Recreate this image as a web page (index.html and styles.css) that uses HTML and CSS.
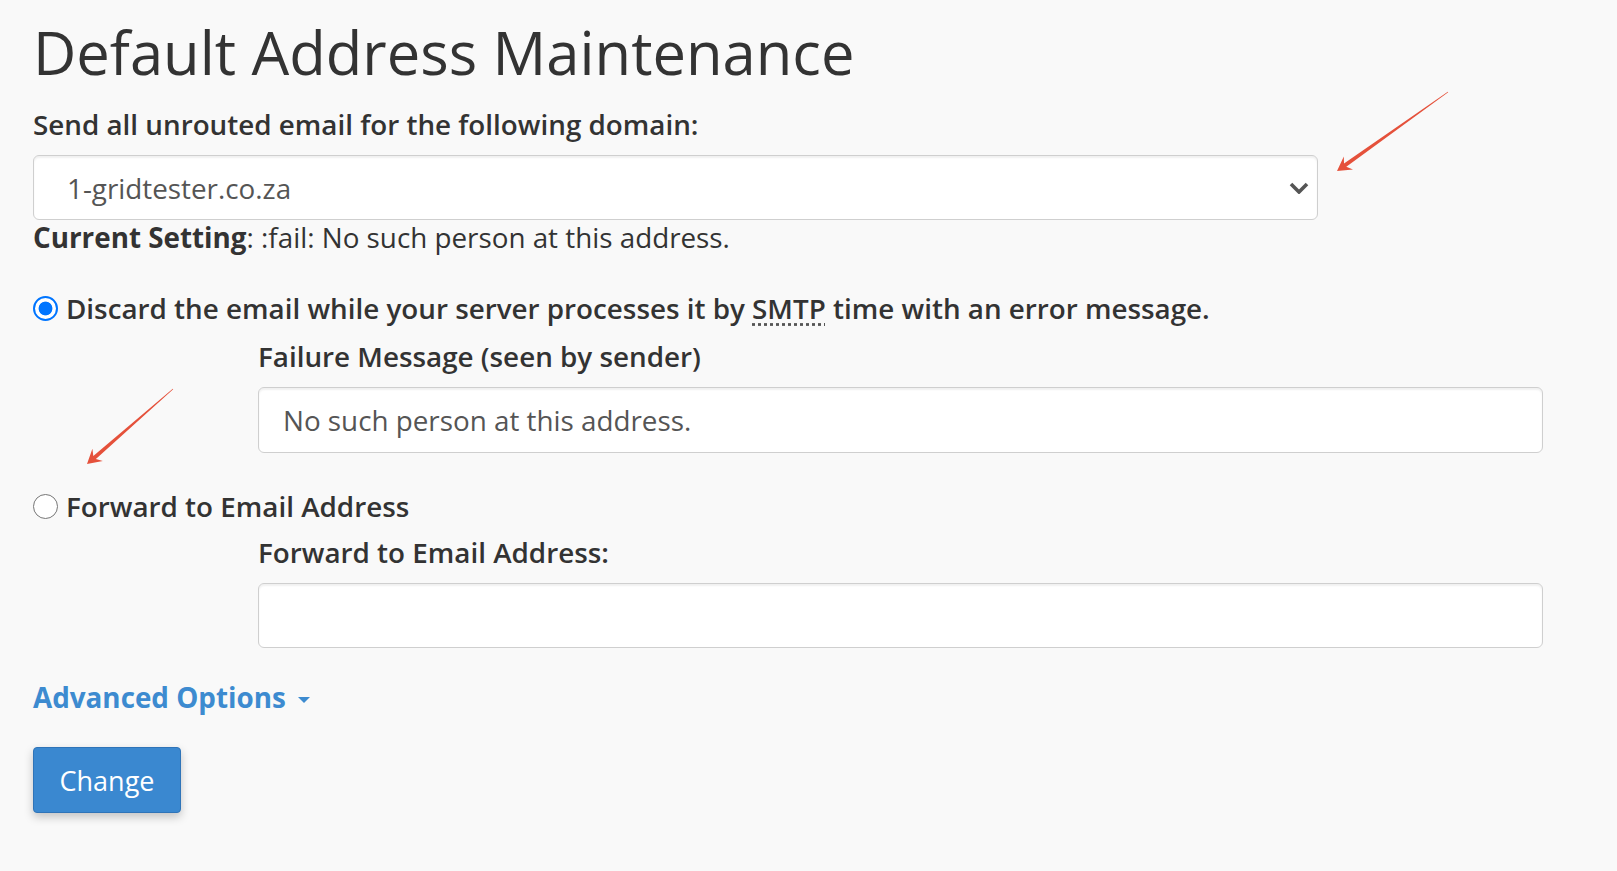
FILE: index.html
```html
<!DOCTYPE html>
<html lang="en">
<head>
<meta charset="utf-8">
<title>Default Address Maintenance</title>
<link rel="stylesheet" href="styles.css">
</head>
<body>
<main class="page">
  <h1 class="title">Default Address Maintenance</h1>

  <label class="field-label first" for="domain">Send all unrouted email for the following domain:</label>
  <div class="select-wrap">
    <select id="domain" class="control select">
      <option>1-gridtester.co.za</option>
    </select>
    <svg class="chevron" width="20" height="12" viewBox="0 0 20 12" aria-hidden="true">
      <polyline points="2,2 10,10 18,2" fill="none" stroke="#555" stroke-width="3.6"/>
    </svg>
  </div>
  <p class="current"><strong>Current Setting</strong>: :fail: No such person at this address.</p>

  <div class="option first-option">
    <label class="radio-label">
      <input type="radio" name="mode" class="radio" checked>
      <span>Discard the email while your server processes it by <abbr title="Simple Mail Transfer Protocol">SMTP</abbr> time with an error message.</span>
    </label>
    <div class="sub">
      <label class="field-label" for="failmsg">Failure Message (seen by sender)</label>
      <input id="failmsg" class="control" type="text" value="No such person at this address.">
    </div>
  </div>

  <div class="option second-option">
    <label class="radio-label">
      <input type="radio" name="mode" class="radio">
      <span>Forward to Email Address</span>
    </label>
    <div class="sub">
      <label class="field-label" for="fwd">Forward to Email Address:</label>
      <input id="fwd" class="control control-short" type="text">
    </div>
  </div>

  <a class="advanced" href="#">Advanced Options <span class="caret"></span></a>

  <div class="actions">
    <button class="btn" type="button">Change</button>
  </div>
</main>

<svg class="annotations" width="1617" height="871" viewBox="0 0 1617 871" aria-hidden="true">
  <polygon fill="#e5513b" points="1337,171 1353,169.4 1346.3,166.8 1448.2,92.2 1447.8,91.8 1344,163.6 1343.8,156.4"/>
  <polygon fill="#e5513b" points="87,464 102.8,461 95.9,459 173.2,389.2 172.8,388.8 93.3,456 92.4,448.8"/>
</svg>
</body>
</html>
```

FILE: styles.css
```css
html, body {
  margin: 0;
  padding: 0;
}

body {
  background: #f9f9f9;
  color: #333;
  font-family: "Open Sans", "Liberation Sans", sans-serif;
  font-size: 27.8px;
  line-height: 31px;
  position: relative;
  min-height: 871px;
  overflow: hidden;
}

.page {
  padding: 0 0 0 33px;
}

.title {
  margin: 20px 0 0;
  font-size: 59.7px;
  line-height: 64px;
  font-weight: 400;
  color: #333;
}

.field-label {
  display: block;
  font-weight: 600;
  margin: 17px 0 15px;
  line-height: 31px;
}

.field-label.first {
  margin-top: 25px;
}

.select-wrap {
  position: relative;
  width: 1285px;
}

.control {
  box-sizing: border-box;
  display: block;
  width: 1285px;
  height: 66px;
  margin: 0;
  padding: 0 24px;
  border: 1px solid #cfcfcf;
  border-radius: 6px;
  background: #fff;
  color: #555;
  font-family: "Open Sans", "Liberation Sans", sans-serif;
  font-size: 27.8px;
  box-shadow: inset 0 2px 2px rgba(0, 0, 0, 0.06);
  outline: none;
}

.control-short {
  height: 65px;
}

.select {
  -webkit-appearance: none;
  appearance: none;
  height: 65px;
  padding-left: 33px;
}

.chevron {
  position: absolute;
  right: 9px;
  top: 27px;
  pointer-events: none;
}

.current {
  margin: 2px 0 0;
  line-height: 31px;
}

.current strong {
  font-weight: 700;
}

.option {
  margin-top: 40px;
}

.second-option {
  margin-top: 38px;
}

.second-option .field-label {
  margin-top: 15px;
}

.radio-label {
  display: flex;
  align-items: center;
  font-weight: 600;
  line-height: 31px;
  height: 31px;
}

.radio {
  -webkit-appearance: none;
  appearance: none;
  box-sizing: border-box;
  width: 25px;
  height: 25px;
  margin: 0 8px 0 0;
  border: 1.6px solid #767676;
  border-radius: 50%;
  background: #fff;
  flex: none;
}

.radio:checked {
  border: 2.5px solid #0075ff;
  background: radial-gradient(circle, #0075ff 0, #0075ff 6.5px, #fff 7.3px);
}

abbr {
  text-decoration: underline dotted #555;
  text-underline-offset: 4px;
}

.sub {
  margin-left: 225px;
}

.advanced {
  display: inline-flex;
  align-items: center;
  margin-top: 34px;
  color: #3d8bd0;
  font-weight: 700;
  text-decoration: none;
  line-height: 31px;
}

.caret {
  display: inline-block;
  width: 0;
  height: 0;
  margin-left: 12px;
  border-left: 6.5px solid transparent;
  border-right: 6.5px solid transparent;
  border-top: 6.5px solid #3d8bd0;
  margin-top: 4px;
}

.actions {
  margin-top: 34px;
}

.btn {
  box-sizing: border-box;
  height: 66px;
  padding: 0 24px;
  min-width: 148px;
  border: 1px solid #2f74b8;
  border-radius: 4px;
  background: #3a88d0;
  color: #fff;
  font-family: "Open Sans", "Liberation Sans", sans-serif;
  font-size: 27px;
  font-weight: 400;
  box-shadow: 0 4px 10px rgba(0, 0, 0, 0.22);
}

.annotations {
  position: absolute;
  left: 0;
  top: 0;
  pointer-events: none;
}
```
